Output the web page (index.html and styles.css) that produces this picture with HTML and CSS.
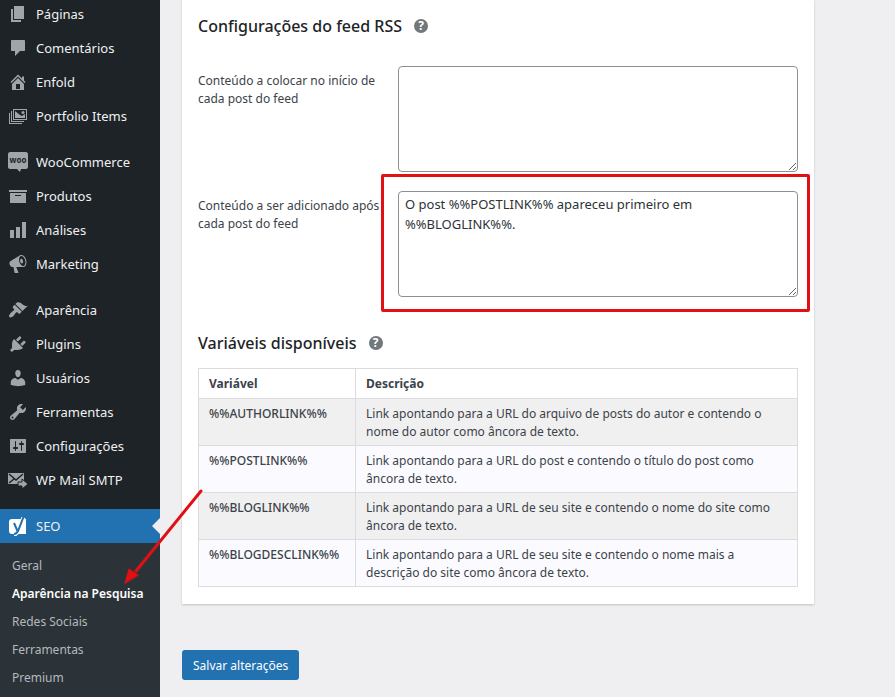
FILE: index.html
```html
<!DOCTYPE html>
<html lang="pt-BR">
<head>
  <meta charset="UTF-8" />
  <meta name="viewport" content="width=device-width, initial-scale=1.0" />
  <title>Aparência na Pesquisa</title>
  <link rel="stylesheet" href="styles.css">
</head>
<body>
  <div class="layout">
    <nav class="sidebar">
      <ul class="menu">
        <li><a href="#"><svg viewBox="0 0 20 20"><path d="M6 15V2h10v13H6zm-1 1h8v2H3V5h2v11z"/></svg>Páginas</a></li>
        <li><a href="#"><svg viewBox="0 0 20 20"><path d="M4 2h12c.6 0 1 .4 1 1v9c0 .6-.4 1-1 1h-4l-5 5v-5H4c-.6 0-1-.4-1-1V3c0-.6.4-1 1-1z"/></svg>Comentários</a></li>
        <li><a href="#"><svg viewBox="0 0 20 20"><path d="M16 8.5l1.53 1.53-1.06 1.06L10 4.6l-6.47 6.49-1.06-1.06L10 2.5l4 4v-2h2v4zm-6-2.46l6 5.99V18H4v-5.97zM12 17v-5H8v5h4z"/></svg>Enfold</a></li>
        <li><a href="#"><svg viewBox="0 0 20 20"><path fill-rule="evenodd" d="M5 3h14v11H5V3zm1 1v9h12V4H6zM3 5h1v10h12v1H3V5zM1 7h1v10h12v1H1V7zM7 5l5 4 2 1 3-2v4H7V5z"/><circle cx="15" cy="6.500" r="1.500"/></svg>Portfolio Items</a></li>

        <li class="gap"><a href="#"><svg viewBox="0 0 20 20"><path d="M2 0h16c1 0 2 1 2 2v13c0 1-1 2-2 2h-5l-1 3-3-3H2c-1 0-2-1-2-2V2c0-1 1-2 2-2z"/><text class="woo" x="10" y="11" text-anchor="middle">woo</text></svg>WooCommerce</a></li>
        <li><a href="#"><svg viewBox="0 0 20 20"><path d="M19 4v2H1V4h18zM2 7h16v10H2V7zm11 3V9H7v1h6z"/></svg>Produtos</a></li>
        <li><a href="#"><svg viewBox="0 0 20 20"><path d="M18 18V2h-4v16h4zm-6 0V7H8v11h4zm-6 0v-8H2v8h4z"/></svg>Análises</a></li>
        <li><a href="#"><svg viewBox="0 0 20 20"><path fill-rule="evenodd" d="M18.150 5.940c.46 1.620.38 3.220-.02 4.480-.42 1.280-1.260 2.180-2.300 2.480-.16.060-.26.060-.4.060-.06.020-.12.020-.18.020-.06.020-.14.020-.22.020h-6.800l2.220 5.500c.02.140-.06.260-.14.340-.08.100-.24.160-.34.160H6.950c-.1 0-.26-.06-.34-.16-.08-.08-.16-.2-.14-.34l-1-5.500H4.250l-.02-.02c-.5.060-1.080-.18-1.540-.62s-.88-1.080-1.060-1.880c-.24-.8-.2-1.560-.02-2.200.18-.62.58-1.080 1.060-1.300l.02-.02 9-5.400c.1-.06.180-.1.240-.16.060-.04.140-.08.240-.12.160-.08.280-.12.500-.18 1.040-.3 2.240.100 3.220.980s1.840 2.240 2.260 3.860zm-2.580 5.980h-.02c.4-.1.740-.34 1.040-.7.580-.7.860-1.760.860-3.040 0-.64-.1-1.300-.28-1.980-.34-1.360-1.020-2.500-1.780-3.240s-1.680-1.100-2.460-.88c-.82.220-1.400.960-1.700 2-.32 1.040-.28 2.360.060 3.720.380 1.360 1 2.500 1.800 3.240.780.740 1.620 1.100 2.480.880zm-2.540-7.080c.220-.04.420-.02.620.040.380.160.760.480 1.020 1s.420 1.200.420 1.780c0 .3-.04.560-.12.800-.18.480-.44.840-.86.940-.34.100-.8-.06-1.140-.4s-.64-.86-.78-1.500c-.18-.62-.12-1.240.020-1.720s.480-.84.820-.94z"/></svg>Marketing</a></li>

        <li class="gap"><a href="#"><svg viewBox="0 0 20 20"><path d="M14.480 11.060L7.410 3.990l1.500-1.500c.5-.56 2.300-.47 3.510.32 1.210.8 1.430 1.280 2.910 2.100 1.180.64 2.450 1.260 4.450.85zm-.71.71L6.700 4.700 4.930 6.470c-.39.39-.39 1.020 0 1.410l1.060 1.060c.39.39.39 1.030 0 1.420-.6.6-1.430 1.110-2.210 1.690-.35.26-.7.53-1.010.84C1.430 14.230.4 16.080 1.400 17.070c.99 1 2.840-.03 4.180-1.360.31-.31.58-.66.85-1.020.57-.78 1.080-1.610 1.690-2.210.39-.39 1.020-.39 1.410 0l1.060 1.060c.39.39 1.020.39 1.410 0z"/></svg>Aparência</a></li>
        <li><a href="#"><svg viewBox="0 0 20 20"><path d="M13.110 4.360L9.870 7.600 8 5.730l3.240-3.240c.35-.34 1.050-.2 1.560.32.52.51.66 1.210.31 1.550zm-8 1.770l.91-1.120 9.010 9.010-1.190.84c-.71.71-2.630 1.160-3.820 1.160H6.140L4.900 17.260c-.59.59-1.540.59-2.120 0-.59-.58-.59-1.530 0-2.120l1.240-1.240v-3.880c0-1.130.4-3.190 1.090-3.890zm7.260 3.970l3.240-3.240c.34-.35 1.040-.21 1.550.31.52.51.66 1.210.31 1.550l-3.240 3.250z"/></svg>Plugins</a></li>
        <li><a href="#"><svg viewBox="0 0 20 20"><path d="M10 9.250c-2.270 0-2.730-3.440-2.730-3.440C7 4.020 7.820 2 9.970 2c2.160 0 2.980 2.020 2.710 3.810 0 0-.41 3.440-2.680 3.440zm0 2.570L12.720 10c2.390 0 4.520 2.330 4.520 4.530v2.490s-3.650 1.130-7.240 1.130c-3.650 0-7.240-1.130-7.240-1.130v-2.490c0-2.250 1.940-4.480 4.470-4.480z"/></svg>Usuários</a></li>
        <li><a href="#"><svg viewBox="0 0 20 20"><path d="M16.680 9.770c-1.340 1.340-3.300 1.670-4.950.99l-5.410 6.520c-.99.99-2.590.99-3.580 0s-.99-2.590 0-3.570l6.520-5.420c-.68-1.650-.35-3.610.99-4.950 1.280-1.280 3.120-1.620 4.720-1.060l-2.890 2.890 2.820 2.820 2.860-2.870c.53 1.580.18 3.390-1.080 4.650zM3.810 16.210c.4.39 1.040.39 1.430 0 .4-.4.4-1.040 0-1.430-.39-.4-1.030-.4-1.430 0-.39.39-.39 1.030 0 1.430z"/></svg>Ferramentas</a></li>
        <li><a href="#"><svg viewBox="0 0 20 20"><path d="M18 16V4c0-.55-.45-1-1-1H3c-.55 0-1 .45-1 1v12c0 .55.45 1 1 1h14c.55 0 1-.45 1-1zM8 11h1c.55 0 1 .45 1 1s-.45 1-1 1H8v1.500c0 .28-.22.5-.5.5s-.5-.22-.5-.5V13H6c-.55 0-1-.45-1-1s.45-1 1-1h1V5.500c0-.28.22-.5.5-.5s.5.22.5.5V11zm5-2h-1c-.55 0-1-.45-1-1s.45-1 1-1h1V5.500c0-.28.22-.5.5-.5s.5.22.5.5V7h1c.55 0 1 .45 1 1s-.45 1-1 1h-1v5.500c0 .28-.22.5-.5.5s-.5-.22-.5-.5V9z"/></svg>Configurações</a></li>
        <li><a href="#"><svg viewBox="0 0 20 20"><path d="M0 3h16v11H0z"/><path class="cut" d="M1 4l7 6 7-6M1 13l5-4"/><path class="out" d="M10 12h4V9l6 5-6 5v-3h-4z"/></svg>WP Mail SMTP</a></li>

        <li class="gap current"><a href="#"><svg viewBox="0 0 20 20"><path d="M4 3h14v15H4c-2 0-3-1-3-3V6c0-2 1-3 3-3z"/><path class="slash" d="M15.500 1.500L10 15c-1 2.500-2 3.500-4 3.500"/><path class="letter" d="M15.500 1L10 15c-1 2-2 3-4 3M6 7l3.500 8"/></svg>SEO</a></li>
      </ul>
      <ul class="submenu">
        <li><a href="#">Geral</a></li>
        <li><a href="#" class="active">Aparência na Pesquisa</a></li>
        <li><a href="#">Redes Sociais</a></li>
        <li><a href="#">Ferramentas</a></li>
        <li><a href="#">Premium</a></li>
      </ul>
    </nav>

    <main class="content">
      <form>
        <section class="card">
          <h2>Configurações do feed RSS <button type="button" class="help" aria-label="Ajuda">?</button></h2>

          <div class="field">
            <label for="rssbefore">Conteúdo a colocar no início de cada post do feed</label>
            <textarea id="rssbefore"></textarea>
          </div>
          <div class="field">
            <label for="rssafter">Conteúdo a ser adicionado após cada post do feed</label>
            <textarea id="rssafter">O post %%POSTLINK%% apareceu primeiro em %%BLOGLINK%%.</textarea>
            <span class="highlight"></span>
          </div>

          <h2>Variáveis disponíveis <button type="button" class="help" aria-label="Ajuda">?</button></h2>

          <table class="variables">
            <thead>
              <tr><th>Variável</th><th>Descrição</th></tr>
            </thead>
            <tbody>
              <tr><td>%%AUTHORLINK%%</td><td>Link apontando para a URL do arquivo de posts do autor e contendo o nome do autor como âncora de texto.</td></tr>
              <tr><td>%%POSTLINK%%</td><td>Link apontando para a URL do post e contendo o título do post como âncora de texto.</td></tr>
              <tr><td>%%BLOGLINK%%</td><td>Link apontando para a URL de seu site e contendo o nome do site como âncora de texto.</td></tr>
              <tr><td>%%BLOGDESCLINK%%</td><td>Link apontando para a URL de seu site e contendo o nome mais a descrição do site como âncora de texto.</td></tr>
            </tbody>
          </table>
        </section>

        <button type="submit" class="save">Salvar alterações</button>
      </form>
    </main>
  </div>

  <!-- arrow pointing at the current submenu item -->
  <svg class="arrow" viewBox="0 0 80 96">
    <path d="M77 3L12 83"/>
    <path class="head" d="M1 95l4-14 9 6z"/>
  </svg>
</body>
</html>
```
FILE: styles.css
```css
:root {
  --dark: #1d2327;
  --submenu: #2c3338;
  --blue: #2271b1;
  --bg: #efeff1;
  --red: #e01014;
}

* {
  box-sizing: border-box;
}

body {
  margin: 0;
  font-family: "Noto Sans", "Open Sans", sans-serif;
  font-size: 12px;
  line-height: 18px;
  color: #3c434a;
  background: var(--bg);
  overflow: hidden;
}

.layout {
  display: flex;
  min-height: 100vh;
}

/* Sidebar */
.sidebar {
  display: flex;
  flex-direction: column;
  flex: 0 0 160px;
  background: var(--dark);
}

.sidebar ul {
  list-style: none;
  margin: 0;
  padding: 0;
}

.sidebar .menu {
  margin-top: -3px;
}

.sidebar a {
  color: #f0f0f1;
  text-decoration: none;
}

.menu a {
  display: flex;
  align-items: center;
  gap: 8px;
  height: 34px;
  padding-left: 8px;
  font-size: 13px;
}

.menu svg {
  width: 20px;
  height: 20px;
  fill: #a0a5aa;
}

.menu .gap {
  margin-top: 12px;
}

.menu .woo {
  font: bold 8px "Open Sans", sans-serif;
  fill: var(--dark);
}

.menu .cut {
  fill: none;
  stroke: var(--dark);
  stroke-width: 1.5;
}

.menu .out {
  stroke: var(--dark);
  stroke-width: 1;
}

.menu .current {
  position: relative;
  background: var(--blue);
}

.menu .current svg {
  fill: #fff;
}

.menu .slash {
  fill: none;
  stroke: #fff;
  stroke-width: 4;
}

.menu .letter {
  fill: none;
  stroke: var(--blue);
  stroke-width: 2;
}

.menu .current::after {
  content: "";
  position: absolute;
  top: 9px;
  right: 0;
  border: 8px solid transparent;
  border-left: 0;
  border-right-color: var(--bg);
}

.sidebar .submenu {
  flex: 1;
  padding: 9px 0 0;
  background: var(--submenu);
}

.submenu a {
  display: block;
  padding: 5px 12px;
  white-space: nowrap;
  color: #b4b9be;
}

.submenu .active {
  color: #fff;
  font-weight: 600;
}

/* Content */
.content {
  flex: 1;
  padding: 0 81px 17px 22px;
}

.card {
  padding: 16px 16px 17px;
  background: #fff;
  box-shadow: 0 1px 2px rgba(0, 0, 0, 0.2);
}

.card h2 {
  display: flex;
  align-items: center;
  gap: 12px;
  margin: 0;
  font-size: 16px;
  line-height: 20px;
  font-weight: 500;
  color: #1d2327;
}

.help {
  width: 14px;
  height: 14px;
  padding: 0;
  border: 0;
  border-radius: 50%;
  background: #72777c;
  color: #fff;
  font: bold 12px/14px "Open Sans", sans-serif;
}

.field {
  position: relative;
  display: flex;
  margin-bottom: 19px;
}

.card h2 + .field {
  margin-top: 30px;
}

.field label {
  flex: 0 0 200px;
  padding: 6px 12px 0 0;
}

.field textarea {
  flex: 1;
  height: 106px;
  padding: 2px 6px;
  border: 1px solid #8c8f94;
  border-radius: 4px;
  font-family: inherit;
  font-size: 13px;
  line-height: 20px;
  color: #2c3338;
  resize: vertical;
}

.highlight {
  position: absolute;
  top: -17px;
  right: -12px;
  bottom: -15px;
  left: 183px;
  border: 3px solid var(--red);
  border-radius: 2px;
  pointer-events: none;
}

.field + h2 {
  margin-top: 36px;
}

.variables {
  width: 100%;
  margin-top: 15px;
  border-collapse: collapse;
}

.variables th,
.variables td {
  padding: 6px 10px 4px;
  border: 1px solid #dcdcde;
  text-align: left;
  vertical-align: top;
}

.variables th {
  padding-bottom: 5px;
  font-weight: 700;
}

.variables th:first-child {
  width: 157px;
}

.variables td:first-child {
  font-weight: 500;
}

.variables tbody tr {
  background: #fbfbff;
}

.variables tbody tr:nth-child(odd) {
  background: #f0f0f0;
}

.save {
  height: 30px;
  margin-top: 46px;
  padding: 0 11px;
  border: 0;
  border-radius: 3px;
  background: var(--blue);
  color: #fff;
  font-family: inherit;
  font-size: 12px;
}

.arrow {
  position: absolute;
  top: 488px;
  left: 124px;
  width: 80px;
  height: 96px;
  fill: none;
  stroke: var(--red);
  stroke-width: 3;
  stroke-linecap: round;
  pointer-events: none;
}

.arrow .head {
  fill: var(--red);
  stroke-width: 1;
}
```
